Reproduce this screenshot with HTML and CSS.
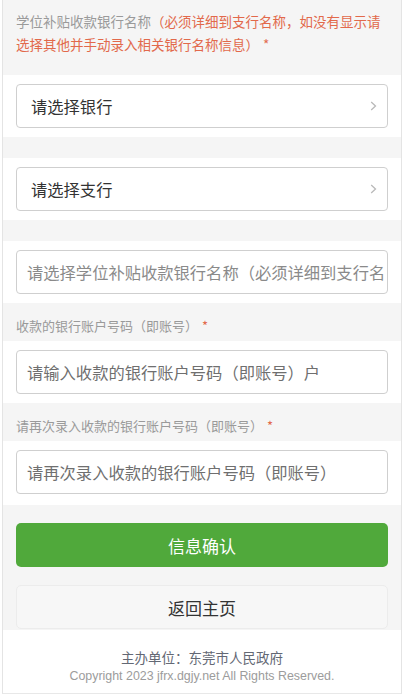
FILE: index.html
```html
<!DOCTYPE html>
<html lang="zh-CN">
<head>
<meta charset="utf-8">
<title>学位补贴收款银行</title>
<link rel="stylesheet" href="styles.css">
</head>
<body>
<div class="page">
  <div class="note"><span class="muted">学位补贴收款银行名称</span><span class="warn">（必须详细到支行名称，如没有显示请</span><span class="warn">选择其他并手动录入相关银行名称信息）</span><span class="star">*</span></div>

  <div class="row">
    <div class="field select"><span class="value">请选择银行</span>
      <svg class="chev" width="7" height="10" viewBox="0 0 7 10"><path d="M1.2 1 L5.5 5 L1.2 9" fill="none" stroke="#b9b9b9" stroke-width="1.3"/></svg>
    </div>
  </div>
  <div class="gap"></div>

  <div class="row">
    <div class="field select"><span class="value">请选择支行</span>
      <svg class="chev" width="7" height="10" viewBox="0 0 7 10"><path d="M1.2 1 L5.5 5 L1.2 9" fill="none" stroke="#b9b9b9" stroke-width="1.3"/></svg>
    </div>
  </div>
  <div class="gap"></div>

  <div class="row">
    <div class="field input light"><span class="ph">请选择学位补贴收款银行名称（必须详细到支行名</span></div>
  </div>

  <div class="label">收款的银行账户号码（即账号）<span class="star">*</span></div>
  <div class="row">
    <div class="field input"><span class="ph">请输入收款的银行账户号码（即账号）户</span></div>
  </div>

  <div class="label">请再次录入收款的银行账户号码（即账号）<span class="star">*</span></div>
  <div class="row last">
    <div class="field input"><span class="ph">请再次录入收款的银行账户号码（即账号）</span></div>
  </div>

  <div class="actions">
    <div class="btn primary">信息确认</div>
    <div class="btn plain">返回主页</div>
  </div>

  <div class="footer">
    <div class="host">主办单位：东莞市人民政府</div>
    <div class="copy">Copyright 2023 jfrx.dgjy.net All Rights Reserved.</div>
  </div>
</div>
</body>
</html>
```

FILE: styles.css
```css
html, body {
  margin: 0;
  padding: 0;
  background: #ffffff;
}
body {
  font-family: "Noto Sans CJK SC", "Noto Sans", sans-serif;
  color: #333;
}
.page {
  margin: 0 2px;
  border-left: 1px solid #e4e4e4;
  border-right: 1px solid #e4e4e4;
  border-bottom: 1px solid #e8e8e8;
  background: #f5f5f5;
}
.note {
  padding: 10px 13px 19px;
  font-size: 13.5px;
  line-height: 23px;
}
.muted { color: #9a9a9a; }
.warn { color: #e2694b; }
.star { color: #e2694b; margin-left: 4px; }
.row {
  background: #fff;
  padding: 9px 13px;
}
.row.last { padding-bottom: 11px; }
.field {
  box-sizing: border-box;
  height: 44px;
  border: 1px solid #cfcfcf;
  border-radius: 4px;
  background: #fff;
  display: flex;
  align-items: center;
  overflow: hidden;
  font-size: 16.3px;
}
.select {
  padding: 0 10px 0 14px;
  justify-content: space-between;
}
.select .value { color: #333; }
.chev { flex: none; }
.input { padding: 0 10px; }
.ph {
  white-space: nowrap;
  color: #6f6f6f;
}
.light .ph { color: #8a8a8a; }
.gap { height: 21px; }
.label {
  padding: 14px 13px 6px;
  font-size: 13px;
  line-height: 18px;
  color: #9a9a9a;
}
.actions {
  padding: 18px 13px 1px;
  display: flex;
  flex-direction: column;
  gap: 18px;
}
.btn {
  box-sizing: border-box;
  height: 44px;
  border-radius: 5px;
  display: flex;
  align-items: center;
  justify-content: center;
  font-size: 17px;
}
.primary {
  background: #50a93b;
  color: #fff;
}
.plain {
  background: #f7f7f7;
  border: 1px solid #ececec;
  color: #333;
}
.footer {
  background: #fff;
  padding: 17px 0 8px;
  text-align: center;
}
.host {
  font-size: 13.5px;
  line-height: 20px;
  color: #636874;
}
.copy {
  font-family: "Liberation Sans", Arial, sans-serif;
  font-size: 12.4px;
  line-height: 18px;
  color: #9c9c9c;
}
```
